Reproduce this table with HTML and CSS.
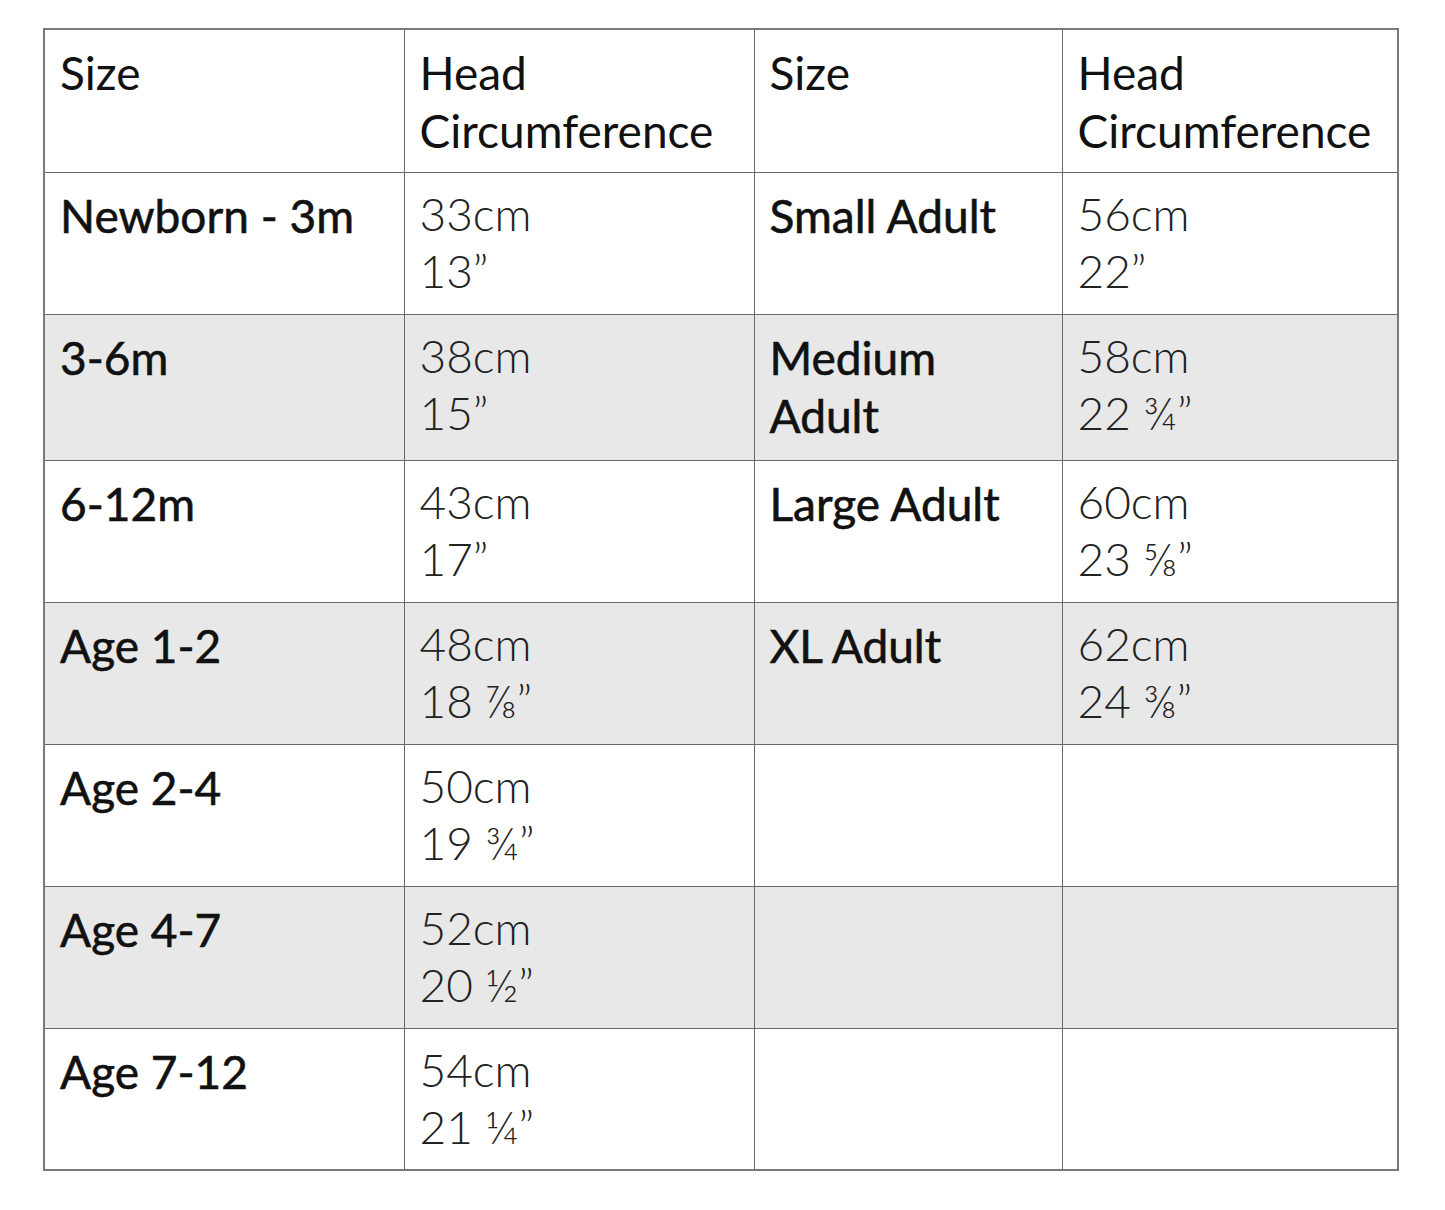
FILE: index.html
```html
<!DOCTYPE html>
<html lang="en">
<head>
<meta charset="utf-8">
<title>Size chart</title>
<link rel="stylesheet" href="styles.css">
</head>
<body>
<table class="chart">
  <colgroup>
    <col class="c1"><col class="c2"><col class="c3"><col class="c4">
  </colgroup>
  <tr class="head">
    <th>Size</th><th>Head<br>Circumference</th><th>Size</th><th>Head<br>Circumference</th>
  </tr>
  <tr>
    <td class="name">Newborn - 3m</td><td class="val">33cm<br>13”</td>
    <td class="name">Small Adult</td><td class="val">56cm<br>22”</td>
  </tr>
  <tr class="alt tall">
    <td class="name">3-6m</td><td class="val">38cm<br>15”</td>
    <td class="name">Medium<br>Adult</td><td class="val">58cm<br>22 ¾”</td>
  </tr>
  <tr>
    <td class="name">6-12m</td><td class="val">43cm<br>17”</td>
    <td class="name">Large Adult</td><td class="val">60cm<br>23 ⅝”</td>
  </tr>
  <tr class="alt">
    <td class="name">Age 1-2</td><td class="val">48cm<br>18 ⅞”</td>
    <td class="name">XL Adult</td><td class="val">62cm<br>24 ⅜”</td>
  </tr>
  <tr>
    <td class="name">Age 2-4</td><td class="val">50cm<br>19 ¾”</td>
    <td></td><td></td>
  </tr>
  <tr class="alt">
    <td class="name">Age 4-7</td><td class="val">52cm<br>20 ½”</td>
    <td></td><td></td>
  </tr>
  <tr>
    <td class="name">Age 7-12</td><td class="val">54cm<br>21 ¼”</td>
    <td></td><td></td>
  </tr>
</table>
</body>
</html>
```

FILE: styles.css
```css
html, body {
  margin: 0;
  padding: 0;
  background: #ffffff;
}
body {
  padding: 28px 0 0 43px;
  font-family: "Lato", "Liberation Sans", sans-serif;
  color: #111111;
}
.chart {
  border-collapse: collapse;
  width: 1354px;
  table-layout: fixed;
  border: 2px solid #7a7a7a;
}
.c1 { width: 360px; }
.c2 { width: 350px; }
.c3 { width: 308px; }
.c4 { width: 336px; }
.chart th,
.chart td {
  border: 1.5px solid #6a6a6a;
  vertical-align: top;
  text-align: left;
  padding: 14px 14px 0 15px;
  box-sizing: border-box;
}
.chart th {
  font-weight: 400;
  font-size: 46px;
  line-height: 58px;
}
.chart .name {
  font-weight: 400;
  font-size: 46px;
  line-height: 58px;
  -webkit-text-stroke: 0.6px #111111;
}
.chart .val {
  font-weight: 300;
  font-size: 46px;
  line-height: 57px;
  color: #222222;
  padding-top: 12px;
}
.chart tr {
  height: 142px;
}
.chart tr.head { height: 143px; }
.chart tr.tall { height: 146px; }
.chart tr.alt td {
  background: #e8e8e8;
}
```
